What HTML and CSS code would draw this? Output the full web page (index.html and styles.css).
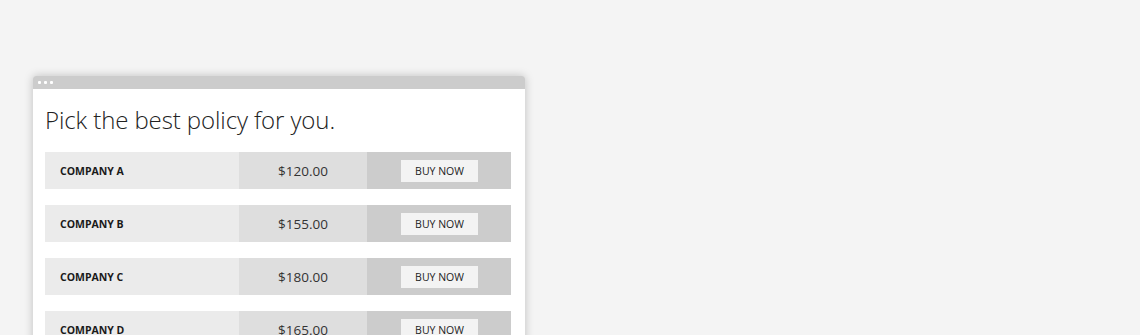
FILE: index.html
```html
<!DOCTYPE html>
<html>
<head>
<meta charset="utf-8">
<link rel="stylesheet" href="styles.css">
</head>
<body>
<div class="stage">
  <div class="window">
    <div class="titlebar"><span class="dot"></span><span class="dot"></span><span class="dot"></span></div>
    <div class="content">
      <h1 class="title">Pick the best policy for you.</h1>
      <div class="rows">
        <div class="row"><div class="name">COMPANY A</div><div class="price">$120.00</div><div class="action"><span class="btn">BUY NOW</span></div></div>
        <div class="row"><div class="name">COMPANY B</div><div class="price">$155.00</div><div class="action"><span class="btn">BUY NOW</span></div></div>
        <div class="row"><div class="name">COMPANY C</div><div class="price">$180.00</div><div class="action"><span class="btn">BUY NOW</span></div></div>
        <div class="row"><div class="name">COMPANY D</div><div class="price">$165.00</div><div class="action"><span class="btn">BUY NOW</span></div></div>
      </div>
    </div>
  </div>
</div>
</body>
</html>
```
FILE: styles.css
```css
html, body {
  margin: 0;
  padding: 0;
  background: #f4f4f4;
  height: 335px;
  overflow: hidden;
  font-family: "Open Sans", "Noto Sans", sans-serif;
}
.stage {
  padding: 76px 0 0 33px;
  height: 335px;
  box-sizing: border-box;
  overflow: hidden;
}
.window {
  width: 492px;
  background: #ffffff;
  box-shadow: 0 0 10px rgba(0, 0, 0, 0.22);
  border-radius: 3px 3px 0 0;
}
.titlebar {
  height: 13px;
  background: #cccccc;
  border-radius: 3px 3px 0 0;
  display: flex;
  align-items: center;
  gap: 3px;
  padding-left: 5px;
}
.dot {
  width: 3px;
  height: 3px;
  border-radius: 1px;
  background: #ffffff;
}
.content {
  padding: 0 14px 20px 12px;
}
.title {
  margin: 0;
  padding-top: 15px;
  height: 63px;
  box-sizing: border-box;
  font-size: 24px;
  font-weight: 300;
  color: #222;
  letter-spacing: -0.1px;
  line-height: 32px;
}
.rows {
  display: flex;
  flex-direction: column;
  gap: 16px;
}
.row {
  display: flex;
  height: 37px;
}
.name {
  width: 194px;
  background: #ebebeb;
  display: flex;
  align-items: center;
  padding-left: 15px;
  box-sizing: border-box;
  font-size: 10.5px;
  font-weight: 700;
  color: #1a1a1a;
}
.price {
  width: 128px;
  background: #dedede;
  display: flex;
  align-items: center;
  justify-content: center;
  font-size: 13.5px;
  color: #333;
}
.action {
  width: 144px;
  background: #cccccc;
  display: flex;
  align-items: center;
  padding-left: 34px;
  box-sizing: border-box;
}
.btn {
  width: 77px;
  height: 22px;
  background: #f3f3f3;
  display: flex;
  align-items: center;
  justify-content: center;
  font-size: 10.5px;
  color: #222;
}
```
